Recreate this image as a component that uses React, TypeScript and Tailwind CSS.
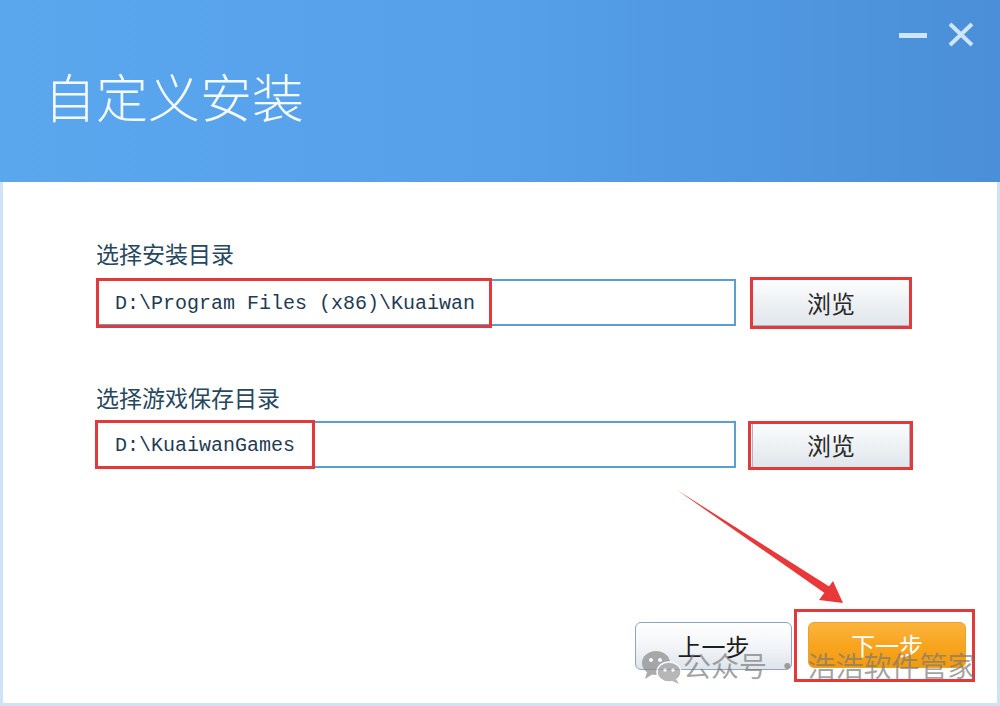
import React from 'react';

const cjk = { fontFamily: '"Noto Sans CJK SC", "Noto Sans", sans-serif' };
const mono = { fontFamily: '"Liberation Mono", "Noto Sans CJK SC", monospace' };

const RedBox = ({ className }: { className: string }) => (
  <div className={`absolute border-[3px] border-[#e2393b] pointer-events-none ${className}`} />
);

const PathRow = ({ value }: { value: string }) => (
  <div className="flex gap-4">
    <div
      className="w-[640px] h-[47px] border-2 border-[#5b9fd0] border-l-[#b9c6d2] bg-white flex items-center pl-[17px] pt-[3px] text-[20px] text-[#1f3c54]"
      style={mono}
    >
      {value}
    </div>
    <button className="w-[158px] h-[47px] rounded-[2px] border border-[#a8b4c1] bg-gradient-to-b from-[#fcfdfe] to-[#e1e6eb] text-[24px] text-[#2a2a2a] flex items-center justify-center">
      浏览
    </button>
  </div>
);

const App: React.FC = () => {
  return (
    <div className="relative w-[1000px] h-[706px] bg-white overflow-hidden" style={cjk}>
      {/* header */}
      <div className="h-[182px] bg-gradient-to-r from-[#5ba7ee] via-[#55a0e9] to-[#4a8fd8] flex flex-col">
        <div className="flex justify-end items-center gap-[21px] pt-[22px] pr-[26px] h-[46px]">
          <div className="w-[28px] h-[5px] bg-[#cfe5fb] mt-[2px]" />
          <svg width="26" height="25" viewBox="0 0 26 25">
            <path d="M2 2 L24 23 M24 2 L2 23" stroke="#cfe5fb" strokeWidth="4" />
          </svg>
        </div>
        <div className="pl-[44px] pt-[22px] text-[52px] leading-[56px] font-light text-[#f4f9ff]">
          自定义安装
        </div>
      </div>

      {/* body */}
      <div className="h-[524px] border-x-[3px] border-b-[3px] border-[#cde3f8] flex flex-col pl-[93px] pr-[31px] pt-[56px] pb-[33px]">
        <div className="text-[23px] leading-[30px] text-[#27475e]">选择安装目录</div>
        <div className="mt-[11px]">
          <PathRow value="D:\Program Files (x86)\Kuaiwan" />
        </div>
        <div className="mt-[56px] text-[23px] leading-[30px] text-[#27475e]">选择游戏保存目录</div>
        <div className="mt-[9px]">
          <PathRow value="D:\KuaiwanGames" />
        </div>

        <div className="mt-auto flex justify-end gap-4">
          <button className="w-[157px] h-[48px] rounded-[6px] border border-[#8ea4c0] bg-gradient-to-b from-[#ffffff] via-[#f3f5f8] to-[#dfe5ec] text-[24px] text-[#1e1e1e] flex items-center justify-center">
            上一步
          </button>
          <button className="w-[158px] h-[46px] rounded-[6px] border border-[#eaa22e] bg-gradient-to-b from-[#fbb43c] via-[#f8a51e] to-[#f39a0c] text-[24px] text-white flex items-center justify-center">
            下一步
          </button>
        </div>
      </div>

      {/* annotations */}
      <RedBox className="left-[96px] top-[278px] w-[396px] h-[50px]" />
      <RedBox className="left-[95px] top-[420px] w-[220px] h-[49px]" />
      <RedBox className="left-[750px] top-[277px] w-[162px] h-[52px]" />
      <RedBox className="left-[748px] top-[421px] w-[165px] h-[49px]" />
      <RedBox className="left-[794px] top-[609px] w-[181px] h-[73px]" />

      <svg className="absolute left-0 top-0 pointer-events-none" width="1000" height="706">
        <polygon points="677,490 830,587 826,594" fill="#e8383a" />
        <polygon points="843,603 819,600 833,581" fill="#e8383a" />
      </svg>

      {/* watermark */}
      <div className="absolute left-[641px] top-[645px] flex items-center gap-0 text-[28px] leading-[40px] text-[#7a7a7a]/70 pointer-events-none">
        <svg width="42" height="36" viewBox="0 0 42 36" className="opacity-70 mt-[4px]">
          <ellipse cx="15" cy="14" rx="14" ry="12" fill="#8a8a8a" />
          <path d="M6 23 L4 30 L12 25 Z" fill="#8a8a8a" />
          <ellipse cx="28" cy="23" rx="12" ry="10" fill="#9a9a9a" stroke="#fff" strokeWidth="1.5" />
          <path d="M35 30 L38 35 L31 32 Z" fill="#9a9a9a" />
          <circle cx="10" cy="11" r="2" fill="#fff" />
          <circle cx="19" cy="11" r="2" fill="#fff" />
          <circle cx="24" cy="21" r="1.7" fill="#fff" />
          <circle cx="32" cy="21" r="1.7" fill="#fff" />
        </svg>
        <span>公众号 · 浩浩软件管家</span>
      </div>
    </div>
  );
};

export default App;
